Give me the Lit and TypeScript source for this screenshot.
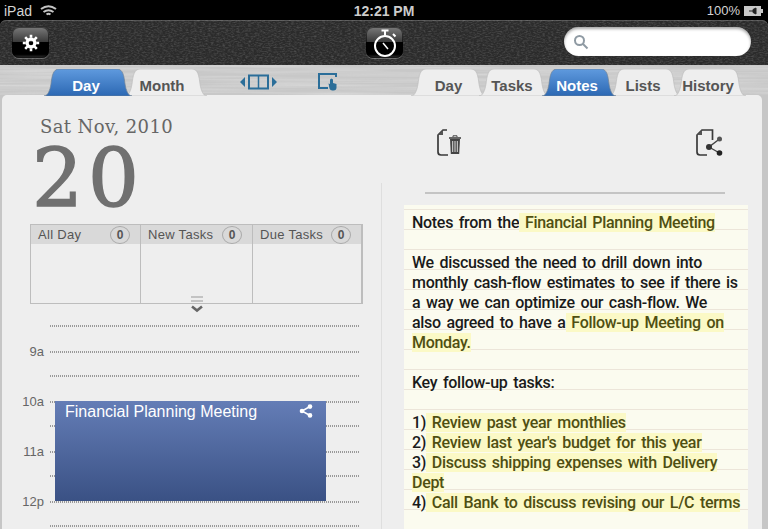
import { LitElement, html, css, svg } from "lit";
import { customElement } from "lit/decorators.js";

function tabPath(w: number, h: number) {
  return `M0 ${h} C4 ${h} 6 ${h - 6} 7 ${h - 12} C8 ${h - 20} 9 0 15 0 L${w - 15} 0 C${w - 9} 0 ${w - 8} ${h - 20} ${w - 7} ${h - 12} C${w - 6} ${h - 6} ${w - 4} ${h} ${w} ${h} Z`;
}

const tabs = (items: [string, number, boolean, number][]) =>
  items.map(
    ([label, w, active, pad]) => html`<div class="tab ${active ? "active" : ""}" style="width:${w}px;padding-right:${pad}px">
      <svg class="tab-shape" width=${w} height="27" viewBox="0 0 ${w} 27">
        <defs>
          <linearGradient id="tabBlue" x1="0" y1="0" x2="0" y2="1">
            <stop offset="0" stop-color="#5f9ade" />
            <stop offset="1" stop-color="#2c68b3" />
          </linearGradient>
        </defs>
        ${svg`<path d=${tabPath(w, 27)} fill=${active ? "url(#tabBlue)" : "#eeeeee"} stroke=${active ? "#6d8196" : "#bdbdbd"} stroke-width="0.7"/>`}
      </svg>
      <span>${label}</span>
    </div>`
  );

const shareIcon = html`<svg viewBox="0 0 14 14" width="14" height="14"><path d="M11 2.500 3 7l8 4.500" fill="none" stroke="currentColor" stroke-width="1.500"/><circle cx="11" cy="2.600" r="2.300" fill="currentColor"/><circle cx="3" cy="7" r="2.300" fill="currentColor"/><circle cx="11" cy="11.400" r="2.300" fill="currentColor"/></svg>`;

@customElement("app-root")
export class AppRoot extends LitElement {
  static styles = css`
    :host { display: block; width: 768px; height: 529px; overflow: hidden; position: relative; background: #000; font-family: "Liberation Sans", Arial, sans-serif; }
    .status { height: 20px; display: grid; grid-template-columns: 1fr auto 1fr; align-items: center; color: #d4d4d4; font-size: 13px; padding: 1px 4px 0 4px; box-sizing: border-box; }
    .st-left { display: flex; align-items: center; gap: 8px; font-size: 14px; }
    .time { font-weight: bold; font-size: 14px; color: #ccc; }
    .st-right { display: flex; justify-content: flex-end; align-items: center; gap: 4px; font-size: 13px; }
    .toolbar { position: relative; height: 45px; border-radius: 6px 6px 0 0; overflow: hidden; display: grid; grid-template-columns: 354px 37px 1fr; align-items: start; padding: 7px 17px 0 12px; box-sizing: border-box; background: #2b2b2b; box-shadow: inset 0 1px 0 #555; }
    .tex { position: absolute; left: 0; top: 0; }
    .gbtn { position: relative; width: 37px; height: 31px; border-radius: 7px; background: linear-gradient(#7a7a7a 0, #3a3a3a 48%, #000 50%, #000 88%, #333 100%); box-shadow: 0 1px 0 rgba(255,255,255,.28), inset 0 0 0 1px rgba(0,0,0,.5); display: flex; align-items: center; justify-content: center; color: #fff; }
    .search { position: relative; justify-self: end; width: 187px; height: 29px; border-radius: 15px; background: #fff; box-shadow: inset 0 2px 3px rgba(0,0,0,.35); display: flex; align-items: center; padding-left: 9px; box-sizing: border-box; color: #8f9aa3; }
    .strip { height: 30px; position: relative; display: flex; align-items: flex-end; padding-left: 44px; box-sizing: border-box; background: #c8c8c8; }
    .tabs { position: relative; display: flex; height: 27px; margin-bottom: -1px; z-index: 2; }
    .tab { position: relative; height: 27px; margin-right: -7px; display: flex; align-items: flex-end; justify-content: center; font-weight: bold; font-size: 15px; color: #555; padding-bottom: 2px; box-sizing: border-box; }
    .tab.active { color: #fff; z-index: 1; }
    .tab-shape { position: absolute; left: 0; top: 0; }
    .tab span { position: relative; line-height: 16px; }
    .view-icons { position: relative; display: flex; align-items: center; gap: 41px; height: 26px; margin: 0 0 0 40px; color: #2b6e99; }
    .right-tabs { margin-left: 74px; }
    .shell { background: #c6c6c6; height: 434px; }
    .panel { position: relative; height: 434px; margin: 0 6px 0 2px; display: grid; grid-template-columns: 379px 1fr; background: #eeeeee; border-radius: 5px 5px 0 0; }
    .pane-l { padding: 19px 0 0 28px; position: relative; }
    .date { font-family: "DejaVu Serif", serif; font-size: 18px; line-height: 26px; color: #666; padding-left: 10px; letter-spacing: 0.4px; }
    .day { font-family: "DejaVu Serif", serif; font-size: 80px; line-height: 64px; height: 64px; color: #707070; -webkit-text-stroke: 1.5px #707070; margin: 7px 0 0 2px; letter-spacing: 5px; }
    .grid3 { margin-top: 13px; width: 333px; height: 80px; box-sizing: border-box; border: 1px solid #bdbdbd; display: grid; grid-template-columns: 110px 112px 1fr; position: relative; }
    .col { border-right: 1px solid #bdbdbd; }
    .col:last-child { border-right: 0; }
    .col-h { height: 19px; background: #d9d9d9; display: flex; align-items: center; justify-content: space-between; padding: 0 0 0 7px; font-size: 13px; color: #555; letter-spacing: 0.3px; }
    .count { width: 18px; height: 16px; border-radius: 50%; border: 1px solid #aaa; font-weight: bold; font-size: 12px; display: flex; align-items: center; justify-content: center; color: #555; margin-right: 10px; letter-spacing: 0; }
    .handle { position: absolute; left: 159px; top: 70px; width: 14px; height: 20px; }
    .times { margin: 21px 0 0 -28px; position: relative; padding-left: 48px; }
    .row { height: 24px; position: relative; width: 309px; background: repeating-linear-gradient(90deg, #999 0 1px, transparent 1px 2px) left top / 100% 2px no-repeat; }
    .row.half { height: 26px; }
    .lab { position: absolute; right: 100%; margin-right: 6px; top: -7px; font-size: 13px; color: #666; line-height: 16px; }
    .event { position: absolute; left: 53px; top: 76px; width: 271px; height: 100px; background: linear-gradient(#647db6, #3a5184); box-sizing: border-box; color: #fff; font-size: 16px; line-height: 22px; padding: 0 0 0 10px; display: flex; justify-content: space-between; align-items: flex-start; }
    .event svg { margin: 3px 13px 0 0; }
    .divider { position: absolute; left: 379px; top: 88px; bottom: 0; width: 1px; background: #dedede; }
    .pane-r { padding: 0 0 0 23px; }
    .doc-icons { display: flex; justify-content: space-between; padding: 34px 0 0 33px; width: 286px; height: 27px; }
    .rule { height: 2px; margin: 36px 0 0 21px; width: 300px; background: #c4c4c4; }
    .paper { margin-top: 11px; width: 344px; height: 325px; box-sizing: border-box; padding: 8px 0 0 8px; color: #1a1a1a; font-family: "Roboto", sans-serif; font-weight: 500; font-size: 16px; line-height: 20px; letter-spacing: -0.3px; word-spacing: 2px; white-space: nowrap;
      background-color: #fbfbef;
      background-image: repeating-linear-gradient(#fbfbef 0 4px, #ece5d9 4px 5px, #fbfbef 5px 20px); }
    .paper p { margin: 0; }
    mark { background: #fbf9c6; color: #4f4f12; }
    .blank { height: 20px; }
  `;

  render() {
    const rows = [
      ["", false], ["9a", true], ["", false], ["10a", true], ["", false], ["11a", true], ["", false], ["12p", true], ["", false],
    ] as [string, boolean][];
    return html`
      <div class="status">
        <div class="st-left">iPad
          <svg width="17" height="13" viewBox="0 0 17 13" fill="none" stroke="#c4c4c4" stroke-width="2"><path d="M1 5q7.500-5.500 15 0"/><path d="M3.500 8q5-3.500 10 0"/><path d="M6.500 10.500q2-1.500 4 0" /></svg>
        </div>
        <div class="time">12:21 PM</div>
        <div class="st-right">100%
          <svg width="20" height="10" viewBox="0 0 20 10"><rect x="0" y="0" width="17" height="10" fill="#c8c8c8"/><rect x="17" y="3" width="2" height="4" fill="#c8c8c8"/><path d="M5 5h4M9 3.500l3-1.500v6l-3-1.500z" stroke="#222" fill="#222"/></svg>
        </div>
      </div>
      <div class="toolbar">
        <svg class="tex" width="768" height="45">
          <filter id="leather" x="0" y="0" width="100%" height="100%">
            <feTurbulence type="fractalNoise" baseFrequency="0.35 0.8" numOctaves="2" seed="4" />
            <feColorMatrix values="0 0 0 0 0.7  0 0 0 0 0.7  0 0 0 0 0.7  1.6 0 0 0 -0.62" />
          </filter>
          <rect width="768" height="45" filter="url(#leather)" opacity=".25" />
        </svg>
        <div class="gbtn">
          <svg width="20" height="20" viewBox="0 0 20 20"><path d="M10 4.500a5.500 5.500 0 1 0 0 11a5.500 5.500 0 0 0 0-11zm0 3.200a2.300 2.300 0 1 1 0 4.600a2.300 2.300 0 0 1 0-4.600z" fill="#fff"/><g stroke="#fff" stroke-width="2.600"><path d="M10 1.800v3M10 15.200v3M1.800 10h3M15.200 10h3M4.200 4.200l2.100 2.100M13.700 13.700l2.100 2.100M15.800 4.200l-2.100 2.100M6.300 13.700l-2.100 2.100"/></g></svg>
        </div>
        <div class="gbtn">
          <svg width="26" height="31" viewBox="0 0 26 31" fill="none" stroke="#fff"><circle cx="13" cy="19" r="10" stroke-width="2"/><path d="M11 16l5 6" stroke-width="1.500"/><path d="M9.500 3.500h7M13 3.500v5M21 7l2.500 2.500" stroke-width="2"/></svg>
        </div>
        <div class="search">
          <svg width="16" height="16" viewBox="0 0 16 16" fill="none" stroke="currentColor" stroke-width="2"><circle cx="6.500" cy="6.500" r="4.500"/><path d="M10 10l4.500 4.500"/></svg>
        </div>
      </div>
      <div class="strip">
        <svg class="tex" width="768" height="30">
          <filter id="metal" x="0" y="0" width="100%" height="100%">
            <feTurbulence type="fractalNoise" baseFrequency="0.008 0.35" numOctaves="2" seed="7" />
            <feColorMatrix values="0 0 0 0 1  0 0 0 0 1  0 0 0 0 1  1.800 0 0 0 -0.65" />
          </filter>
          <rect width="768" height="30" filter="url(#metal)" opacity=".35" />
        </svg>
        <div class="tabs">${tabs([["Day", 88, true, 4], ["Month", 82, false, 8]])}</div>
        <div class="view-icons">
          <svg width="37" height="16" viewBox="0 0 37 16"><path d="M0 8l5-5v10zM37 8l-5-5v10z" fill="currentColor"/><rect x="9" y="1.500" width="19" height="13" fill="none" stroke="currentColor" stroke-width="2"/><path d="M18.500 1.500v13" stroke="currentColor" stroke-width="1.500"/></svg>
          <svg width="19" height="18" viewBox="0 0 19 18"><path d="M18 4V1H1v14h9" fill="none" stroke="currentColor" stroke-width="2"/><path d="M12 6.500l1.500-1 1.500 1V10l3.500 1v3.500a3 3 0 0 1-3 3h-1a3 3 0 0 1-3-2l-1-5 1.500.5z" fill="currentColor"/></svg>
        </div>
        <div class="tabs right-tabs">${tabs([["Day", 75, false, 0], ["Tasks", 70, false, 4], ["Notes", 74, true, 4], ["Lists", 72, false, 4], ["History", 72, false, 4]])}</div>
      </div>
      <div class="shell">
        <div class="panel">
          <div class="pane-l">
            <div class="date">Sat Nov, 2010</div>
            <div class="day">20</div>
            <div class="grid3">
              <div class="col"><div class="col-h">All Day<span class="count">0</span></div></div>
              <div class="col"><div class="col-h">New Tasks<span class="count">0</span></div></div>
              <div class="col"><div class="col-h">Due Tasks<span class="count">0</span></div></div>
              <svg class="handle" viewBox="0 0 14 20" fill="none"><path d="M1 2h12M1 6h12" stroke="#b5b5b5" stroke-width="1.500"/><path d="M2 11.500l5 4 5-4" stroke="#666" stroke-width="2.600"/></svg>
            </div>
            <div class="times">
              ${rows.map(([l, h]) => html`<div class="row ${h ? "hour" : "half"}">${l ? html`<span class="lab">${l}</span>` : ""}</div>`)}
              <div class="event"><span>Financial Planning Meeting</span>${shareIcon}</div>
            </div>
          </div>
          <div class="divider"></div>
          <div class="pane-r">
            <div class="doc-icons">
              <svg width="25" height="27" viewBox="0 0 25 27" fill="none"><path d="M10 1H6L1 6v17a3 3 0 0 0 3 3h7" stroke="#3a3a3a" stroke-width="1.700"/><path d="M6 1v5H1z" fill="#555"/><path d="M12 9h12" stroke="#444" stroke-width="1.600"/><path d="M16 8V6.800h4V8" stroke="#444"/><path d="M13 10h10l-.8 15h-8.400z" fill="#444"/><path d="M15.700 12v11M18 12v11M20.300 12v11" stroke="#eee" stroke-width=".9"/></svg>
              <svg width="27" height="27" viewBox="0 0 27 27" fill="none"><path d="M16.500 11V1H6L1 6v17a3 3 0 0 0 3 3h7" stroke="#3a3a3a" stroke-width="1.700"/><path d="M6 1v5H1z" fill="#555"/><path d="M23.500 10 13 18l10.500 6" stroke="#444" stroke-width="1.400"/><circle cx="23.500" cy="10" r="2.500" fill="#555"/><circle cx="13" cy="18" r="3" fill="#333"/><circle cx="23.500" cy="24" r="2.800" fill="#222"/></svg>
            </div>
            <div class="rule"></div>
            <div class="paper">
              <p>Notes from the<mark> Financial Planning Meeting</mark></p>
              <div class="blank"></div>
              <p>We discussed the need to drill down into<br />monthly cash-flow estimates to see if there is<br />a way we can optimize our cash-flow. We<br />also agreed to have a<mark> Follow-up Meeting on</mark><br /><mark>Monday.</mark></p>
              <div class="blank"></div>
              <p>Key follow-up tasks:</p>
              <div class="blank"></div>
              <p>1)<mark> Review past year monthlies</mark></p>
              <p>2)<mark> Review last year's budget for this year</mark></p>
              <p>3)<mark> Discuss shipping expenses with Delivery</mark><br /><mark>Dept</mark></p>
              <p>4)<mark> Call Bank to discuss revising our L/C terms</mark></p>
            </div>
          </div>
        </div>
      </div>
    `;
  }
}
